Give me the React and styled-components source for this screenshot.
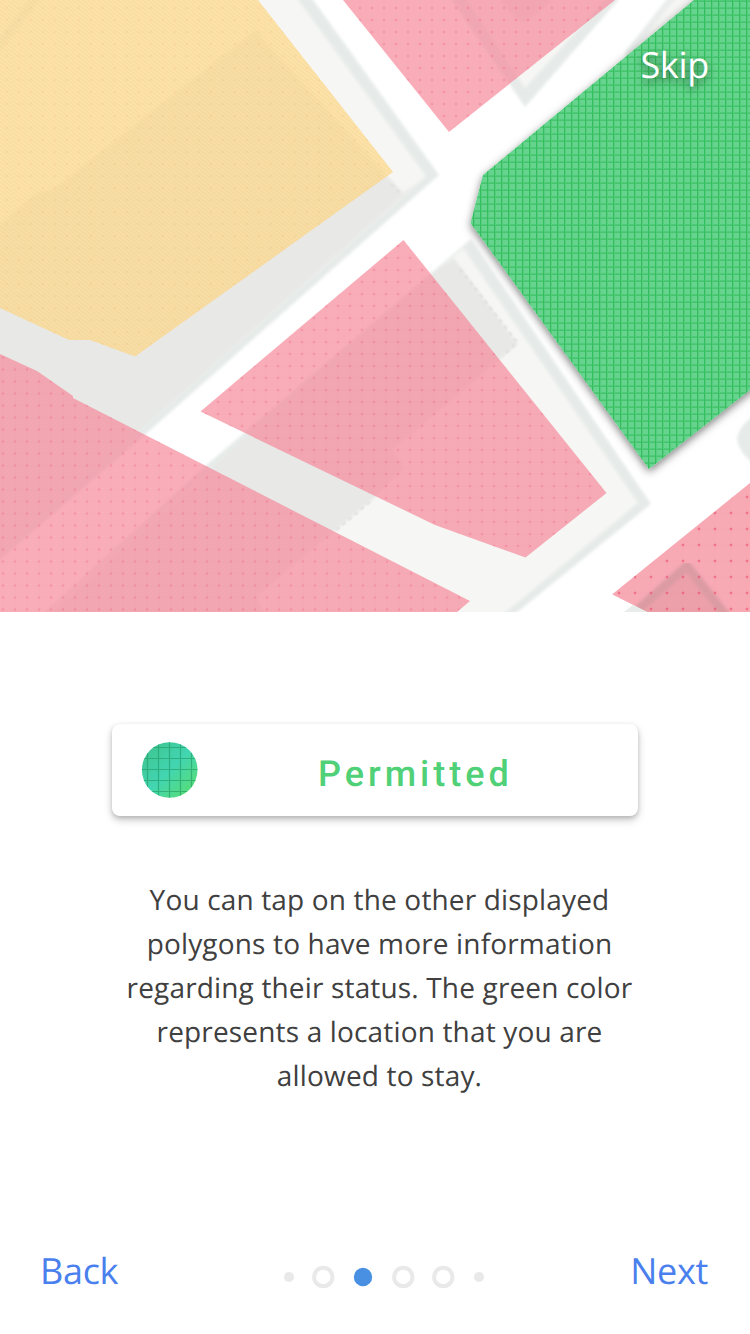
import React from "react";
import styled, { createGlobalStyle } from "styled-components";

const GlobalStyle = createGlobalStyle`
  body { margin: 0; background: #fff; }
`;

const Screen = styled.main`
  width: 750px;
  height: 1334px;
  display: flex;
  flex-direction: column;
  background: #fff;
  font-family: "Open Sans", sans-serif;
  text-rendering: geometricPrecision;
  overflow: hidden;
`;

const Hero = styled.section`
  position: relative;
  height: 612px;
  flex: none;
`;

const MapSvg = styled.svg`
  display: block;
`;

const TextButton = styled.button`
  border: 0;
  padding: 0;
  background: none;
  font: 400 36px/49px "Open Sans", sans-serif;
  letter-spacing: -0.3px;
  text-rendering: geometricPrecision;
  color: ${(p) => p.$color};
`;

const SkipButton = styled(TextButton)`
  position: absolute;
  top: 40px;
  right: 41px;
  text-shadow: 0 4px 8px rgba(0, 0, 0, 0.5);
`;

const Content = styled.section`
  flex: 1;
  display: flex;
  flex-direction: column;
  align-items: center;
  padding-top: 112px;
`;

const StatusCard = styled.div`
  box-sizing: border-box;
  width: 526px;
  height: 92px;
  padding-left: 29px;
  border-radius: 8px;
  background: #fff;
  box-shadow: 0 4px 8px rgba(0, 0, 0, 0.2), 0 2px 4px rgba(0, 0, 0, 0.15);
  display: flex;
  align-items: center;
`;

const Swatch = styled.svg`
  display: block;
  flex: none;
`;

const StatusLabel = styled.span`
  margin: 8px 0 0 120px;
  font: 500 36px/42px Roboto, sans-serif;
  letter-spacing: 4px;
  color: #50d077;
`;

const Description = styled.p`
  margin: 62px 0 0 9px;
  text-align: center;
  font-size: 28px;
  line-height: 44px;
  letter-spacing: 0.16px;
  color: #404040;
  white-space: nowrap;
`;

const Footer = styled.footer`
  display: flex;
  justify-content: space-between;
  align-items: center;
  height: 50px;
  padding: 0 42px 39px 40px;
`;

const Pager = styled.svg`
  display: block;
  margin: 14px 0 0 20px;
`;

const LINES = [
  "You can tap on the other displayed",
  "polygons to have more information",
  "regarding their status. The green color",
  "represents a location that you are",
  "allowed to stay.",
];

const ZONES = {
  top: "343,0 449,132 615,0",
  middle: "403.5,240 606.5,493 525.5,557.5 435,525 200.5,411.5",
  left: "0,354 37,371 73,396 73,398 470,601 457,612 0,612",
  corner: "750,483 612,594.5 647,612 750,612",
  yellow: "0,0 258,0 393,172 135,356.5 90,340 69,340 0,308",
};

function Dots({ id, x, y, size = 12, strength = 0.13 }) {
  const c = size / 2;
  return (
    <pattern id={id} x={x - c} y={y - c} width={size} height={size} patternUnits="userSpaceOnUse">
      <path d={`M${c} 0V${size}M0 ${c}H${size}`} stroke="#e85068" strokeWidth="1" opacity=".03" />
      <rect x={c - 1} y={c - 1} width="2" height="2" fill="#e9395a" opacity={strength} />
      <path d={`M${c} ${c - 2}v4M${c - 2} ${c}h4`} stroke="#e9395a" opacity={strength * 0.7} />
    </pattern>
  );
}

function MapView() {
  return (
    <MapSvg width="750" height="612" viewBox="0 0 750 612">
      <defs>
        <filter id="soft" x="-5%" y="-5%" width="110%" height="110%">
          <feGaussianBlur stdDeviation="1.6" />
        </filter>
        <filter id="lift" x="-20%" y="-20%" width="140%" height="140%">
          <feDropShadow dx="0" dy="3" stdDeviation="4.5" floodColor="#000" floodOpacity=".5" />
        </filter>
        <Dots id="dotsTop" x={384} y={8} />
        <Dots id="dotsMiddle" x={386} y={270} />
        <Dots id="dotsLeft" x={51} y={405.5} />
        <Dots id="dotsCorner" x={683} y={545} size={16} strength={0.34} />
        <linearGradient id="hatch" gradientUnits="userSpaceOnUse" x1="0" y1="0" x2="1.95" y2="-2.44" spreadMethod="repeat">
          <stop offset="0" stopColor="#f0b860" stopOpacity="0" />
          <stop offset=".5" stopColor="#f0b860" stopOpacity=".2" />
          <stop offset="1" stopColor="#f0b860" stopOpacity="0" />
        </linearGradient>
        <pattern id="specks" x="0.7" y="2" width="12" height="12" patternUnits="userSpaceOnUse">
          <rect x="5" y="5" width="2" height="2" fill="#f5a05a" opacity=".14" />
        </pattern>
        <pattern id="grid" x="564" y="161" width="7" height="7" patternUnits="userSpaceOnUse">
          <rect width="7" height="7" fill="#66d48e" />
          <rect width="7" height="2" fill="#50ca78" />
          <rect width="1" height="7" fill="#34be5d" />
          <rect x="1" width="1" height="7" fill="#57cc7f" />
          <rect y="1" width="7" height="1" fill="#2fb957" opacity=".3" />
        </pattern>
      </defs>
      <rect width="750" height="612" fill="#fff" />

      <g filter="url(#soft)">
        <path d="M-20 -10H306L439 175L148 432L-20 577Z" fill="#e6ebe9" />
        <path d="M-20 -10H291L426 176L143 427L-20 570Z" fill="#f6f6f4" />
        <path d="M-20 240L38 192L52 190L255 30L403 193L418 182L143 427L-20 571Z" fill="#e8e8e6" />
        <path d="M-20 70L50 -20" stroke="#e6ebe9" strokeWidth="9" />

        <path d="M471 239L651 504L505 622H34L209 463Z" fill="#e6ebe9" />
        <path d="M463 248L638 503L500 617H42L214 466Z" fill="#f6f6f4" />
        <path d="M434 272L454 258L518 344L393 450L405 468L372 500L257 596L268 622H40L214 466Z" fill="#e8e8e6" />

        <path d="M445 -10L525 107L627 -10Z" fill="#e6ebe9" />
        <path d="M460 -10L525 88L614 -10Z" fill="#f6f6f4" />
        <path d="M495 -10Q512 20 523 23Q535 20 560 -10Z" fill="#e8e8e6" />
        <path d="M674 -10L625 52L630 70L750 -10Z" fill="#e9edeb" />
        <path d="M682 -10L636 48L750 -10Z" fill="#f6f6f4" />
        <path d="M760 412Q737 425 737 441Q742 458 760 468Z" fill="#e6ebe9" />
        <path d="M624 620L687 566L730 620Z" fill="#e8edeb" />
      </g>
      <path d="M460 269L517 342L503 356M391 184L401 194M370 502L333 533" fill="none" stroke="#dededc" strokeWidth="3" strokeDasharray="4 4" opacity=".5" />

      <polygon points={ZONES.yellow} fill="#ffda88" fillOpacity=".66" />
      <polygon points={ZONES.yellow} fill="url(#hatch)" />
      <polygon points={ZONES.yellow} fill="url(#specks)" />
      <g fill="#f58a9b" fillOpacity=".7">
        <polygon points={ZONES.top} />
        <polygon points={ZONES.middle} />
        <polygon points={ZONES.left} />
      </g>
      <polygon points={ZONES.corner} fill="#f7a9b4" />
      <g filter="url(#soft)">
        <path d="M640 609L687 567L724 618H650Z" fill="#eca0a9" />
        <path d="M633 614L687 566L728 618" fill="none" stroke="#dc9ba3" strokeWidth="9" />
      </g>
      <path d="M612 594.5L647 612H600Z" fill="#fff" />
      <path d="M624 612L633 605L647 612Z" fill="#e8edeb" />
      <polygon points={ZONES.top} fill="url(#dotsTop)" />
      <polygon points={ZONES.middle} fill="url(#dotsMiddle)" />
      <polygon points={ZONES.left} fill="url(#dotsLeft)" />
      <polygon points={ZONES.corner} fill="url(#dotsCorner)" />
      <g filter="url(#lift)">
        <path d="M694 0L483 175L470.5 223L649 469L750 390L790 360V-60H766Z" fill="url(#grid)" />
      </g>
    </MapSvg>
  );
}

function PermittedSwatch() {
  return (
    <Swatch width="57" height="57" viewBox="0 0 57 57">
      <defs>
        <linearGradient id="swatchFill" x1="0" y1="0" x2="1" y2="1">
          <stop offset=".12" stopColor="#3fc692" />
          <stop offset=".5" stopColor="#42d5b2" />
          <stop offset=".85" stopColor="#55dc7c" />
        </linearGradient>
        <clipPath id="swatchClip"><circle cx="28.7" cy="28" r="27.8" /></clipPath>
      </defs>
      <g clipPath="url(#swatchClip)">
        <rect width="57" height="57" fill="url(#swatchFill)" />
        <path d="M6.5 0V57M17.5 0V57M28.5 0V57M39.5 0V57M50.5 0V57M0 5.5H57M0 16.5H57M0 27.5H57M0 38.5H57M0 49.5H57" stroke="#249a67" strokeWidth="1.2" opacity=".62" />
      </g>
    </Swatch>
  );
}

function PageDots() {
  return (
    <Pager width="202" height="24" viewBox="0 0 202 24">
      <g fill="#e9e9e9">
        <circle cx="6" cy="12" r="5" />
        <circle cx="196" cy="12" r="5" />
      </g>
      <circle cx="80" cy="12" r="9.2" fill="#4a90e2" />
      <g fill="none" stroke="#e9e9e9" strokeWidth="4">
        <circle cx="40.3" cy="12" r="9.2" />
        <circle cx="120.3" cy="12" r="9.2" />
        <circle cx="160.3" cy="12" r="9.2" />
      </g>
    </Pager>
  );
}

export default function App() {
  return (
    <Screen>
      <GlobalStyle />
      <Hero>
        <MapView />
        <SkipButton $color="#fff">Skip</SkipButton>
      </Hero>
      <Content>
        <StatusCard>
          <PermittedSwatch />
          <StatusLabel>Permitted</StatusLabel>
        </StatusCard>
        <Description>
          {LINES.map((line) => (
            <React.Fragment key={line}>{line}<br /></React.Fragment>
          ))}
        </Description>
      </Content>
      <Footer>
        <TextButton $color="#4a80ee">Back</TextButton>
        <PageDots />
        <TextButton $color="#4a80ee">Next</TextButton>
      </Footer>
    </Screen>
  );
}
